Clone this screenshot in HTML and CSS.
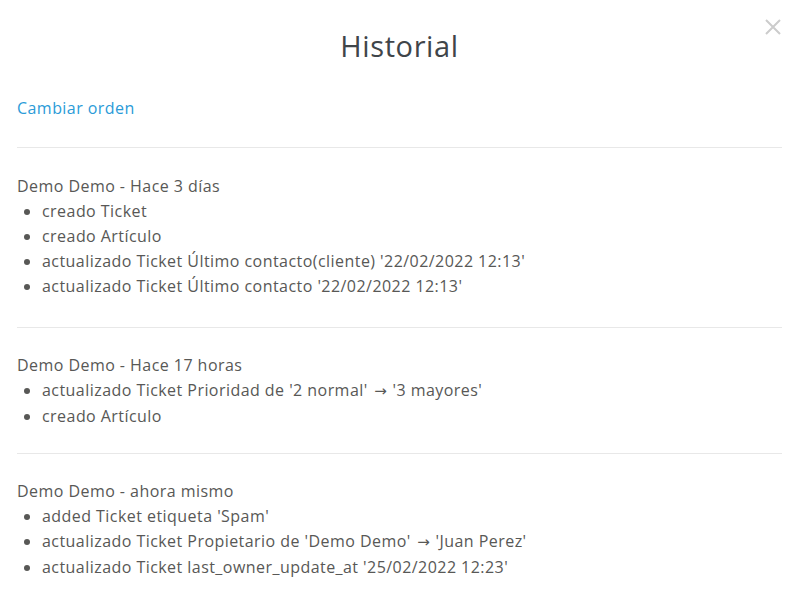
FILE: index.html
```html
<!DOCTYPE html>
<html lang="es">
<head>
    <meta charset="UTF-8">
    <title>Historial</title>
    <link rel="stylesheet" href="styles.css">
</head>
<body>
    <div class="modal">
        <div class="modal-header">
            <h1 class="modal-title">Historial</h1>
            <span class="modal-close">
                <svg width="18" height="18" viewBox="0 0 18 18"><path d="M2 2 L16 16 M16 2 L2 16" stroke="#cccccc" stroke-width="2" fill="none"/></svg>
            </span>
        </div>
        <div class="modal-body">
            <a class="sort-link" href="#">Cambiar orden</a>

            <div class="history-entry first">
                <div class="history-head">Demo Demo - Hace 3 días</div>
                <ul class="history-list">
                    <li>creado Ticket</li>
                    <li>creado Artículo</li>
                    <li>actualizado Ticket Último contacto(cliente) '22/02/2022 12:13'</li>
                    <li>actualizado Ticket Último contacto '22/02/2022 12:13'</li>
                </ul>
            </div>

            <div class="history-entry">
                <div class="history-head">Demo Demo - Hace 17 horas</div>
                <ul class="history-list">
                    <li>actualizado Ticket Prioridad de '2 normal' <span class="arrow">→</span> '3 mayores'</li>
                    <li>creado Artículo</li>
                </ul>
            </div>

            <div class="history-entry">
                <div class="history-head">Demo Demo - ahora mismo</div>
                <ul class="history-list">
                    <li>added Ticket etiqueta 'Spam'</li>
                    <li>actualizado Ticket Propietario de 'Demo Demo' <span class="arrow">→</span> 'Juan Perez'</li>
                    <li>actualizado Ticket last_owner_update_at '25/02/2022 12:23'</li>
                </ul>
            </div>
        </div>
    </div>
</body>
</html>
```

FILE: styles.css
```css
body {
    margin: 0;
    padding: 0;
    background: #ffffff;
    font-family: 'Open Sans', 'Noto Sans', sans-serif;
    color: #585856;
    overflow: hidden;
}

.modal {
    width: 796px;
    height: 596px;
    box-sizing: border-box;
    padding: 0 14px 0 17px;
}

.modal-header {
    position: relative;
    height: 94px;
    display: flex;
    justify-content: center;
}

.modal-title {
    margin: 26px 0 0;
    font-size: 29px;
    font-weight: 400;
    line-height: 40px;
    height: 40px;
    letter-spacing: 0.6px;
    color: #3f4549;
}

.modal-close {
    position: absolute;
    top: 18px;
    right: 0;
    width: 18px;
    height: 18px;
}

.modal-body {
    font-size: 16px;
    line-height: 25px;
    letter-spacing: 0.45px;
}

.sort-link {
    display: block;
    color: #2b9bd8;
    text-decoration: none;
    line-height: 28px;
    padding-bottom: 25px;
}

.history-entry {
    border-top: 1px solid #e8e8e8;
    padding: 25px 0 24px;
}

.history-entry.first {
    padding: 26px 0 28px;
}

.history-head {
    line-height: 25px;
}

.history-list {
    margin: 0;
    padding-left: 25px;
}

.arrow {
    font-family: 'DejaVu Sans', sans-serif;
    font-size: 15px;
    letter-spacing: 0;
    margin: 0 1px 0 2px;
}
```
